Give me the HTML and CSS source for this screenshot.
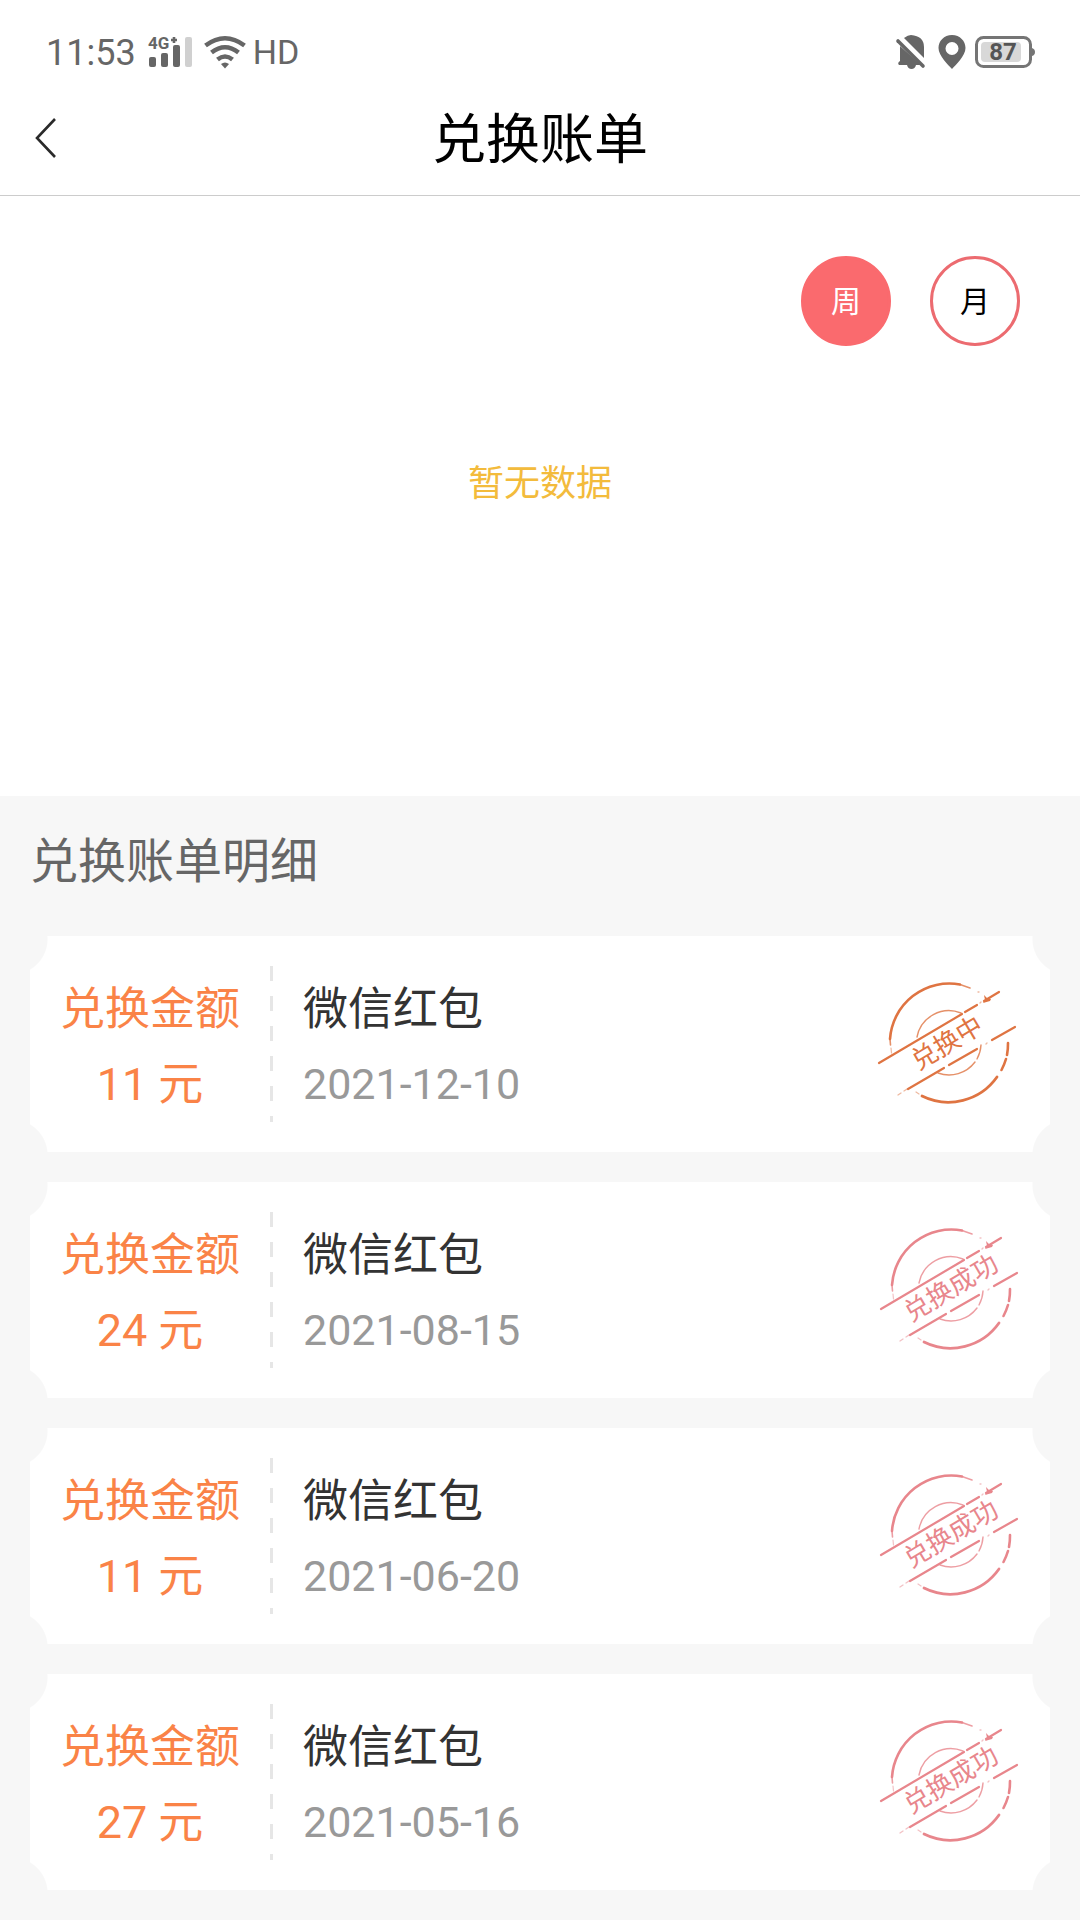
FILE: index.html
```
<!DOCTYPE html>
<html lang="zh-CN">
<head>
<meta charset="utf-8">
<meta name="viewport" content="width=device-width, initial-scale=1">
<title>兑换账单</title>
<link rel="stylesheet" href="styles.css">
</head>
<body>
<svg class="defs" aria-hidden="true">
  <symbol id="stamp-rings" viewBox="0 0 150 150">
    <g fill="none" stroke="currentColor" stroke-linecap="round">
      <path stroke-width="2.600" d="M20 70A59.500 59.500 0 0 1 90 15.500"/>
      <path stroke-width="1.600" opacity=".8" d="M90 15.500l10 3.500M20 70l.5 6"/>
      <path stroke-width="2.800" d="M52 127A59.500 59.500 0 0 0 127 108"/>
      <path stroke-width="1.200" opacity=".5" d="M46 123l3 2M21 79l.5 5"/>
      <path stroke-width="2.600" d="M131.500 101A59.500 59.500 0 0 0 136 90M137 86A59.500 59.500 0 0 0 138 74"/>
      <path stroke-width="1.400" opacity=".8" d="M47 68A32.500 32.500 0 0 1 91 44M68 104A32.500 32.500 0 0 0 105 93M107 90A32.500 32.500 0 0 0 111 76"/>
      <path stroke-width="2.200" d="M9 94L92 45M95 43l12-7M114 32l15-9M38 120l36-21M79 96l28-16M122 71l23-13"/>
      <path stroke-width="1.300" opacity=".5" d="M28 126l3-2M34 122l3-2M116 75l1-1M110 34l1-1M108 23h1"/>
    </g>
    <path fill="currentColor" d="M114 26l3 3 4 1-1 2-7 2 2-3z"/>
  </symbol>
</svg>

<header class="top">
  <div class="status">
    <div class="status-group">
      <span class="clock">11:53</span>
      <svg class="signal" viewBox="0 0 44 32" role="img" aria-label="4G+">
        <text class="signal-text" x="0" y="13">4G</text>
        <path d="M26 1v6M23 4h6" stroke="#666" stroke-width="2.600"/>
        <g fill="#666"><rect x="1" y="21" width="7" height="10" rx="2"/><rect x="13" y="17" width="7" height="14" rx="2"/><rect x="25" y="9" width="7" height="22" rx="2"/></g>
        <rect x="37" y="1" width="7" height="30" rx="2" fill="#d0d0d0"/>
      </svg>
      <svg class="wifi" viewBox="0 0 42 32" aria-hidden="true">
        <g fill="none" stroke="#666" stroke-width="4.600">
          <path d="M1.500 9.500Q21-5 40.500 9.500"/>
          <path d="M7.500 16.500Q21 6 34.500 16.500"/>
          <path d="M13.500 23.500Q21 17.500 28.500 23.500"/>
        </g>
        <path fill="#666" d="M17 28q4-3 8 0l-4 4.500z"/>
      </svg>
      <span class="hd">HD</span>
    </div>
    <div class="status-group status-right">
      <svg class="bell" viewBox="0 0 30 36" aria-hidden="true">
        <path fill="#666" d="M4 12L25 31H20Q19 35 15.500 35T11 31H3Q1 29 4 27zM8 4Q12 1 15 1 28 2 28 13v11z"/>
        <path fill="none" stroke="#666" stroke-width="3.600" stroke-linecap="round" d="M2 7L27 32"/>
      </svg>
      <svg class="pin" viewBox="0 0 28 36" aria-hidden="true">
        <path fill="#666" fill-rule="evenodd" d="M14 1C6 1 .5 7 .5 14c0 8 10 17 13.500 21 3.500-4 13.500-13 13.500-21C27.500 7 22 1 14 1zm0 7a6.500 6.500 0 1 1 0 13 6.500 6.500 0 0 1 0-13z"/>
      </svg>
      <svg class="battery" viewBox="0 0 60 32" role="img" aria-label="87%">
        <rect x="1.500" y="1.500" width="54" height="29" rx="7" fill="none" stroke="#757575" stroke-width="3"/>
        <rect x="6" y="6" width="40" height="20" rx="4" fill="#d8d8d8"/>
        <path fill="#757575" d="M57 12q3 1 3 4t-3 4z"/>
        <text class="battery-text" x="28" y="24" text-anchor="middle">87</text>
      </svg>
    </div>
  </div>
  <nav class="nav">
    <a class="back" href="#" aria-label="返回">
      <svg viewBox="0 0 22 40" aria-hidden="true"><path d="M20 1L2 20l18 19" fill="none" stroke="#2a2a2a" stroke-width="2.600"/></svg>
    </a>
    <h1 class="nav-title">兑换账单</h1>
  </nav>
</header>

<main>
  <section class="chart">
    <div class="periods">
      <button class="period period-active" type="button" aria-pressed="true">周</button>
      <button class="period" type="button" aria-pressed="false">月</button>
    </div>
    <p class="empty">暂无数据</p>
  </section>

  <section class="details">
    <h2 class="details-title">兑换账单明细</h2>
    <ul class="bills">
      <li class="bill">
        <div class="amount"><span>兑换金额</span><span>11 元</span></div>
        <div class="info"><span class="kind">微信红包</span><time class="date" datetime="2021-12-10">2021-12-10</time></div>
        <svg class="stamp stamp-pending" viewBox="0 0 150 150" role="img" aria-label="兑换中">
          <use href="#stamp-rings"/>
          <text class="stamp-text" x="77" y="83" text-anchor="middle" transform="rotate(-31 77 74)">兑换中</text>
        </svg>
      </li>
      <li class="bill">
        <div class="amount"><span>兑换金额</span><span>24 元</span></div>
        <div class="info"><span class="kind">微信红包</span><time class="date" datetime="2021-08-15">2021-08-15</time></div>
        <svg class="stamp stamp-done" viewBox="-2 0 150 150" role="img" aria-label="兑换成功">
          <use href="#stamp-rings" width="150" height="150"/>
          <text class="stamp-text" x="79" y="82" text-anchor="middle" transform="rotate(-31 79 73)">兑换成功</text>
        </svg>
      </li>
      <li class="bill">
        <div class="amount"><span>兑换金额</span><span>11 元</span></div>
        <div class="info"><span class="kind">微信红包</span><time class="date" datetime="2021-06-20">2021-06-20</time></div>
        <svg class="stamp stamp-done" viewBox="-2 0 150 150" role="img" aria-label="兑换成功">
          <use href="#stamp-rings" width="150" height="150"/>
          <text class="stamp-text" x="79" y="82" text-anchor="middle" transform="rotate(-31 79 73)">兑换成功</text>
        </svg>
      </li>
      <li class="bill">
        <div class="amount"><span>兑换金额</span><span>27 元</span></div>
        <div class="info"><span class="kind">微信红包</span><time class="date" datetime="2021-05-16">2021-05-16</time></div>
        <svg class="stamp stamp-done" viewBox="-2 0 150 150" role="img" aria-label="兑换成功">
          <use href="#stamp-rings" width="150" height="150"/>
          <text class="stamp-text" x="79" y="82" text-anchor="middle" transform="rotate(-31 79 73)">兑换成功</text>
        </svg>
      </li>
    </ul>
  </section>
</main>
</body>
</html>
```
FILE: styles.css
```
* { box-sizing: border-box; margin: 0; padding: 0; }

body {
  background: #f7f7f7;
  color: #333;
  font-family: Roboto, "Noto Sans CJK SC", sans-serif;
}

.defs { display: none; }

.top {
  background: #fff;
  border-bottom: 1px solid #ccc;
}

.status {
  display: flex;
  justify-content: space-between;
  align-items: center;
  height: 84px;
  padding: 20px 45px 0 46px;
  color: #666;
}

.status-group { display: flex; align-items: center; }
.status-right { gap: 12px; }

.clock { font-size: 36px; line-height: 42px; padding-top: 2px; }
.hd { font-size: 34px; line-height: 42px; margin-left: 7px; }

.status svg { display: block; overflow: visible; }
.signal { width: 44px; height: 32px; margin-left: 12px; }
.signal-text { font-size: 17px; font-weight: 700; fill: #666; }
.wifi { width: 42px; height: 32px; margin-left: 12px; }
.bell { width: 30px; height: 36px; }
.pin { width: 28px; height: 36px; }
.battery { width: 60px; height: 32px; }
.status-right .battery { margin-left: -3px; }
.battery-text { font-size: 24px; font-weight: 700; fill: #555; }

.nav {
  display: grid;
  grid-template-columns: 96px 1fr 96px;
  align-items: center;
  height: 111px;
}

.back { display: flex; padding: 18px 0 22px 35px; }
.back svg { width: 22px; height: 40px; }

.nav-title {
  padding-top: 2px;
  color: #000;
  font-size: 54px;
  font-weight: 400;
  line-height: 72px;
  text-align: center;
}

.chart {
  min-height: 600px;
  padding: 60px;
  background: #fff;
}

.periods { display: flex; justify-content: flex-end; gap: 39px; }

.period {
  width: 90px;
  height: 90px;
  padding-top: 2px;
  border: 3px solid #ec6b70;
  border-radius: 50%;
  background: #fff;
  color: #000;
  font-family: inherit;
  font-size: 30px;
  line-height: 42px;
}

.period-active { background: #fa6a6e; border-color: #fa6a6e; color: #fff; }

.empty {
  margin-top: 114px;
  color: #f3bb3c;
  font-size: 36px;
  line-height: 48px;
  text-align: center;
}

.details { padding: 0 30px 30px; }

.details-title {
  color: #666;
  font-size: 48px;
  font-weight: 400;
  line-height: 72px;
  padding: 30px 0 38px;
}

.bills { display: grid; gap: 30px; list-style: none; }

/* Ticket with a bite taken out of each corner */
.bill {
  display: flex;
  align-items: center;
  min-height: 216px;
  padding: 30px;
  background:
    radial-gradient(circle at -18px 3px, transparent 35px, #fff 36px) 0 0 / 50% 50%,
    radial-gradient(circle at calc(100% + 18px) 3px, transparent 35px, #fff 36px) 100% 0 / 50% 50%,
    radial-gradient(circle at -18px calc(100% + 3px), transparent 35px, #fff 36px) 0 100% / 50% 50%,
    radial-gradient(circle at calc(100% + 18px) calc(100% + 3px), transparent 35px, #fff 36px) 100% 100% / 50% 50%;
  background-repeat: no-repeat;
}

.amount, .info {
  display: flex;
  flex-direction: column;
  padding-top: 6px;
  font-size: 45px;
  line-height: 75px;
}

.amount {
  width: 213px;
  padding-right: 33px;
  background: repeating-linear-gradient(#e6e6e6 0 15px, transparent 15px 30px) 100% 0 / 3px 100% no-repeat;
  color: #fa8347;
  text-align: center;
}

.info { flex: 1; padding-left: 30px; }
.date { color: #999; font-size: 43px; }

.stamp { width: 150px; height: 150px; overflow: visible; }
.stamp-text { font-size: 26px; fill: currentColor; }
.stamp-pending { color: #df7442; }
.stamp-done { color: #e8868c; }
```
